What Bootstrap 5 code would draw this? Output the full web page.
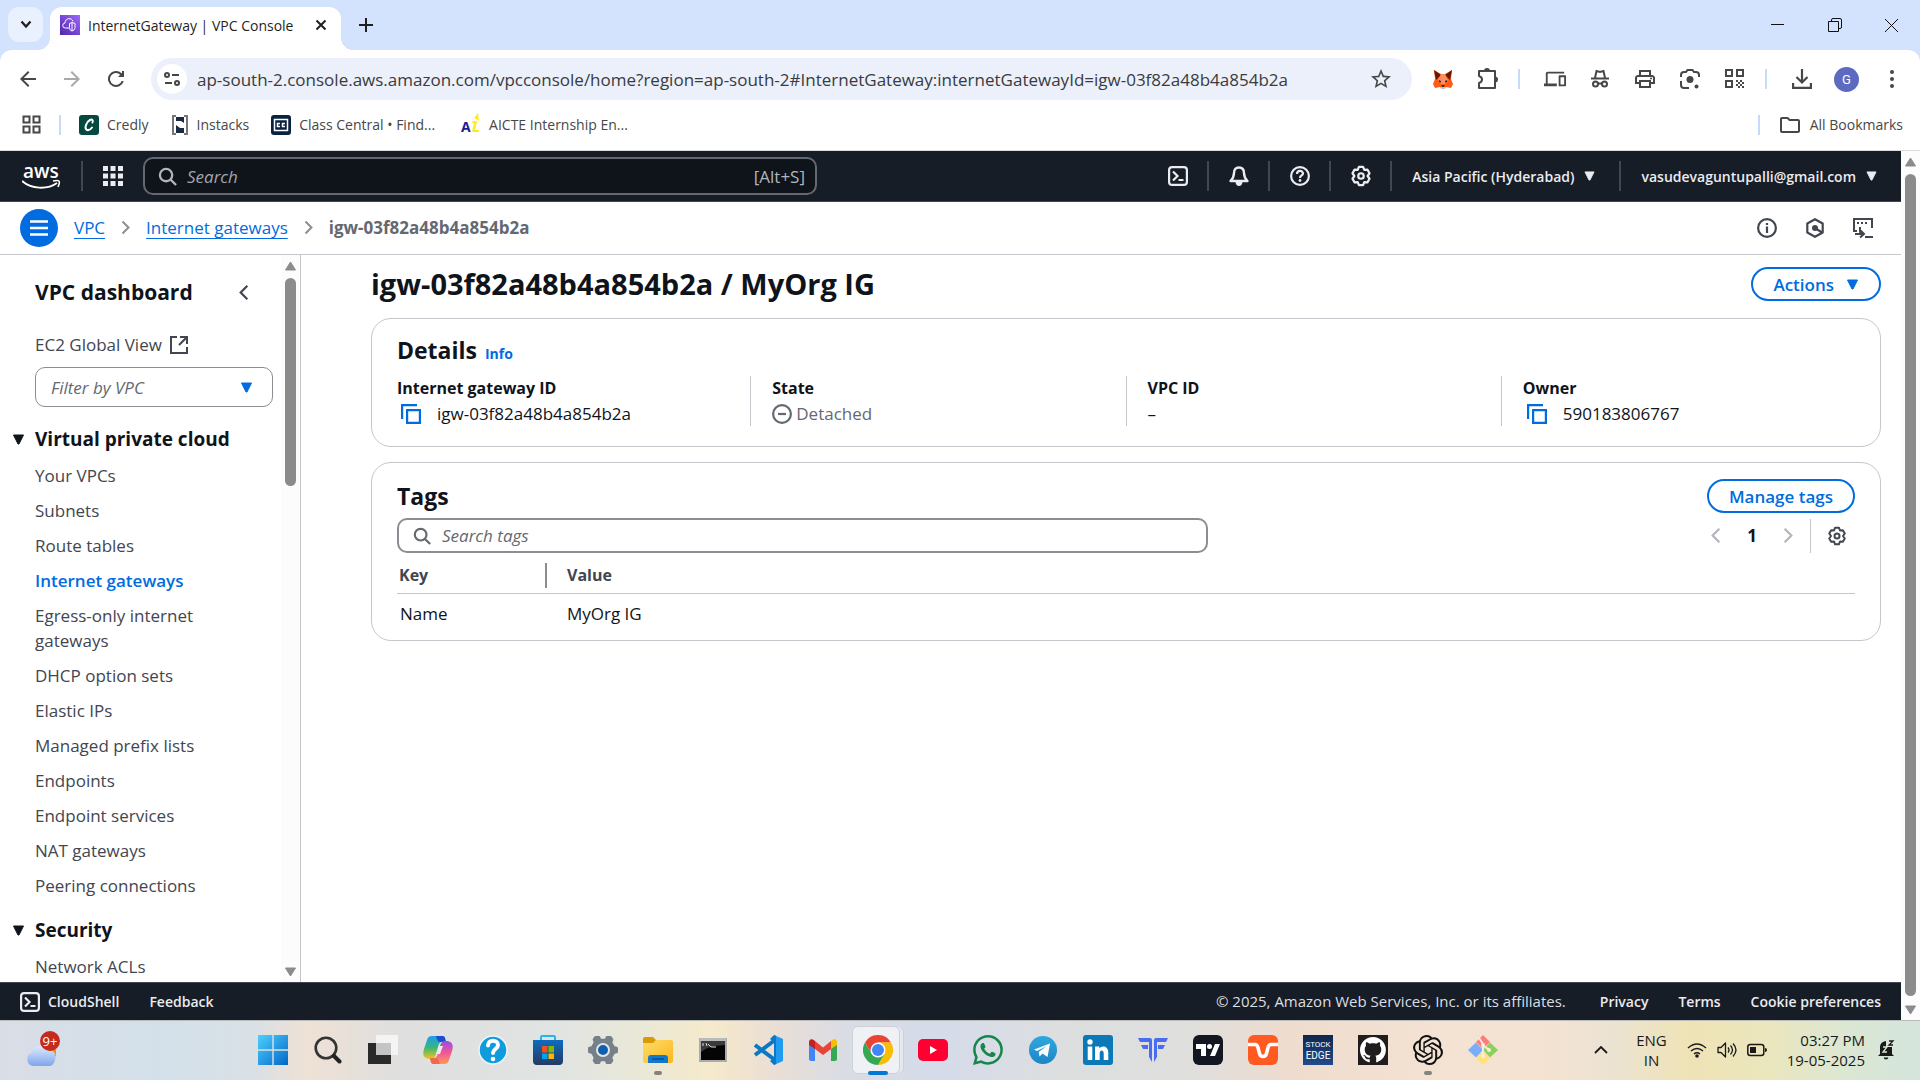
<!DOCTYPE html>
<html lang="en">
<head>
<meta charset="utf-8">
<meta name="viewport" content="width=device-width, initial-scale=1">
<title>InternetGateway | VPC Console</title>
<link href="https://cdn.jsdelivr.net/npm/bootstrap@5.3.0/dist/css/bootstrap.min.css" rel="stylesheet">
<style>
:root{--ink:#0f141a;--ink2:#424650;--muted:#656871;--blue:#006ce0;--rule:#c6c6cd;--bar:#161d26;--strip:#d3e3fd}
body{font-family:"Open Sans","Noto Sans",sans-serif;font-size:17px;line-height:25px;color:var(--ink);background:#fff}
button,input,select{font-family:inherit;line-height:inherit;color:inherit}
svg{display:block;flex:none}
a{color:inherit;text-decoration:none}
.plain{border:0;background:none;padding:0;display:flex;align-items:center;justify-content:center;flex:none}
.ln{fill:none;stroke:currentColor}
.i20{width:20px;height:20px}.i30{width:30px;height:30px}
.caret{width:11px;height:10px}
.caret-lg{width:13px;height:11px}
.c-blue{color:var(--blue)}.c-muted{color:var(--muted)}.c-ink2{color:var(--ink2)}.c-off{color:#b4b4bb}.c-sep{color:#8c8c94}
.shrinkable{min-height:0;min-width:0}
/* browser chrome */
.tabstrip{background:var(--strip);height:50px;padding:7px 0 0 8px;font-size:14px;color:#1f1f1f}
.tabsearch{width:35px;height:35px;border-radius:11px;background:#e9f0fe}
.tabcur{width:291px;height:43px;border-radius:12px 12px 0 0;background:#fff;padding:0 14px 7px 10px;margin-left:7px;position:relative}
.tabcur::before,.tabcur::after{content:"";position:absolute;bottom:0;width:12px;height:12px}
.tabcur::before{left:-12px;background:radial-gradient(circle at 0 0,transparent 12px,#fff 12px)}
.tabcur::after{right:-12px;background:radial-gradient(circle at 100% 0,transparent 12px,#fff 12px)}
.newtab{width:36px;height:36px;margin-left:7px}
.winctl button{width:57px;height:36px}
.toolwrap{background:var(--strip)}
.toolbar{background:#fff;border-radius:12px 12px 0 0;height:58px;color:#474747;padding:0 6px}
.toolbar .tb{width:44px;height:44px}
.toolbar .ext{width:45px}
.toolbar .vsep{margin:0 12px 0 8px}
.omni{height:42px;border-radius:21px;background:#ebf0fa;padding:0 20px 0 6px;margin-left:13px}
.omni input{border:0;background:none;outline:0;font-size:17px;color:#3a3b3e;padding:0 0 0 10px;min-width:0}
.siteinfo{width:30px;height:30px;border-radius:15px;background:#fff}
.vsep{width:2px;height:20px;background:#c7dafb;flex:none}
.avatar{width:25px;height:25px;border-radius:50%;background:#5c6bc0;color:#fff;font:400 13px/25px Roboto,sans-serif}
.bookmarks{height:43px;border-bottom:1px solid #dadce0;padding:0 17px 9px 22px;font-size:14px;line-height:20px;color:#474747;gap:22px}
.bookmarks a{display:flex;align-items:center;gap:8px}
.bookmarks .vsep{margin:0 -4px}
/* console header */
.awsbar{background:var(--bar);height:51px;color:#ebebf0;padding:0 24px 0 22px;font-size:15px;border-bottom:1px solid #424650}
.awsbar .div{width:2px;height:30px;background:#424650;flex:none}
.gsearch{width:674px;height:38px;border:2px solid #656871;border-radius:10px;background:#0f141a;padding:0 10px 0 13px;font-size:17px;color:#b4b4bb;margin-left:20px}
.gsearch input{background:none;border:0;outline:0;min-width:0}
.gsearch input::placeholder{color:#a4a4ad;font-style:italic;opacity:1}
.hdrbtn{width:59px}
.hdrtxt{font-size:14px;font-weight:600;gap:10px}
.crumbs{height:53px;border-bottom:1px solid var(--rule);padding:0 28px 1px 20px}
.burger{width:38px;height:38px;border-radius:50%;background:var(--blue);color:#fff}
.crumbs li a{color:var(--blue);text-decoration:underline;text-underline-offset:4px}
.crumbs li{display:flex;align-items:center}
/* side navigation */
.sidenav{width:301px;border-right:1px solid var(--rule);flex:none;min-height:0}
.navbody{overflow:hidden;padding:25px 0 0 35px;color:var(--ink2);min-height:0}
.navbody h2{font-size:21px;line-height:25px;font-weight:700;color:var(--ink);margin:0 0 27px}
.vpcsel{width:238px;height:40px;border:1px solid #8c8c94;border-radius:10px;padding:0 19px 0 15px;margin:10px 0 20px}
.vpcsel select{border:0;background:none;appearance:none;outline:0;font-style:italic;color:var(--muted);padding:0}
.navbody h3{font-size:19px;line-height:25px;font-weight:700;color:var(--ink);margin:0 0 11px -23px;gap:10px}
.navbody ul{margin:0 0 20px;width:190px}
.navbody li{margin-bottom:10px}
.navbody li .on{color:var(--blue);font-weight:600}
.vbar{background:#fcfcfc;color:#8b8b8b;flex:none;width:19px;padding:6px 0 5px}
.thumb{width:11px;border-radius:6px;background:#8b8b8b;margin:7px 0 9px}
.thumb-nav{height:29%}
/* content */
.content{padding:12px 20px 0 70px;min-width:0}
.titlebar{margin-bottom:17px}
.content h1{font-size:29px;line-height:34px;font-weight:700;margin:0}
.panel{border:1px solid var(--rule);border-radius:20px;padding:16px 25px 0}
.panel-details{padding-bottom:20px;margin-bottom:15px}
.panel h2{font-size:23px;line-height:30px;font-weight:700;margin:0}
.info{font-size:14px;font-weight:700}
.pill{border:2px solid var(--blue);border-radius:17px;height:34px;background:#fff;color:var(--blue);font-weight:600;font-size:17px;padding:0 20px;display:flex;align-items:center;gap:12px}
.facts{--bs-gutter-x:42px;margin-top:10px}
.facts .col+.col{border-left:1px solid var(--rule)}
.facts dt{font-size:16px;font-weight:700}.facts dd{margin:0}
.tagtools{margin-top:5px}
.tagsearch{width:811px;height:35px;border:2px solid #8c8c94;border-radius:10px;padding:0 14px;color:var(--muted)}
.tagsearch input{border:0;background:none;outline:0;padding:0 0 0 11px;min-width:0}
.tagsearch input::placeholder{color:var(--muted);font-style:italic;opacity:1}
.pageno{margin:0 26px}
.pagerule{width:1px;height:34px;background:var(--rule);margin:0 16px 0 17px}
.tagtable{width:100%}
.tagtable th{padding:10px 0 5px;color:var(--ink2);font-weight:700;font-size:16px;border-bottom:1px solid var(--rule)}
.tagtable th:first-child{width:150px}
.tagtable th>div{border-right:2px solid #8c8c94;padding-left:2px}
.tagtable th:last-child>div{border:0}
.tagtable td{padding:7px 0 14px 3px}
.tagtable th:last-child>div,.tagtable td:last-child{padding-left:20px}
.foot{background:var(--bar);color:#ebebf0;height:38px;padding:0 20px;font-size:14px;font-weight:600;border-top:1px solid #424650;gap:30px}
.foot .legal{font-size:15px;font-weight:400;color:#dedee3;margin-right:4px}
/* taskbar */
.taskbar{height:60px;border-top:1px solid #b9bcb9;padding-bottom:2px;color:#1a1a1a;font-size:15px;line-height:20px;background:linear-gradient(90deg,#d9dde6 0,#d3e0ea 8%,#d9e0e6 13%,#eee1d5 16%,#dfdfdf 21%,#e0e4e2 29%,#e9e8d8 33%,#f5eacb 37%,#ecdfd4 40%,#d9dce4 44%,#d5dbea 49%,#dcdedf 55%,#dfdfdd 62%,#eedccf 67%,#f4e2d3 76%,#f3e2d2 81%,#ebe3d2 84%,#efe3b6 88%,#ebe6bd 92%,#dce7d3 96%,#d4e5dc 100%)}
.tasks{width:245px;flex:none;padding-left:24px}
.app{width:55px;height:58px;position:relative}
.app.run::after{content:"";position:absolute;bottom:4px;width:8px;height:4px;border-radius:2px;background:#85837c}
.app.active::before{content:"";position:absolute;inset:5px 5px 5px 2px;border-radius:6px;background:#f0f1f5;border:1px solid #cfd1d8;box-shadow:4px 0 0 -1px #e6e8ef,5px 0 0 -1px #cfd1d8}
.app.active::after{width:20px;height:4px;background:#0078d4}
.app svg{position:relative}
.tray{padding-right:25px}
.traybtns{gap:10px}
.clock{margin:0 12px 0 20px}
</style>
</head>
<body class="vh-100 d-flex flex-column overflow-hidden">
<svg width="0" height="0" class="position-absolute" aria-hidden="true">
<defs>
<linearGradient id="gWin" x1="0" y1="0" x2="1" y2="1"><stop offset="0" stop-color="#4fd0ff"/><stop offset="1" stop-color="#0067c8"/></linearGradient>
<linearGradient id="gCopA" x1="0" y1="0" x2="0" y2="1"><stop offset="0" stop-color="#1e9bf0"/><stop offset=".5" stop-color="#37b779"/><stop offset="1" stop-color="#f5c518"/></linearGradient>
<linearGradient id="gCopB" x1="0" y1="0" x2="0" y2="1"><stop offset="0" stop-color="#9a4be0"/><stop offset=".5" stop-color="#f0569a"/><stop offset="1" stop-color="#ff9a55"/></linearGradient>
<linearGradient id="gStore" x1="0" y1="0" x2="0" y2="1"><stop offset="0" stop-color="#0f6cbd"/><stop offset="1" stop-color="#253a63"/></linearGradient>
<linearGradient id="gFold" x1="0" y1="0" x2="1" y2="1"><stop offset="0" stop-color="#ffdc6b"/><stop offset="1" stop-color="#fbb71a"/></linearGradient>
<linearGradient id="gCloud" x1="0" y1="0" x2="0" y2="1"><stop offset="0" stop-color="#dbe8ff"/><stop offset="1" stop-color="#7ea6ea"/></linearGradient>
<linearGradient id="gVpc" x1="0" y1="1" x2="1" y2="0"><stop offset="0" stop-color="#4d27aa"/><stop offset="1" stop-color="#a166ff"/></linearGradient>
<linearGradient id="gTg" x1="0" y1="0" x2="0" y2="1"><stop offset="0" stop-color="#2fa8e0"/><stop offset="1" stop-color="#1c86c4"/></linearGradient>
<linearGradient id="gStk" x1="0" y1="0" x2="0" y2="1"><stop offset="0" stop-color="#10254a"/><stop offset="1" stop-color="#234a8c"/></linearGradient>
</defs>
<symbol id="caret" viewBox="0 0 12 11"><path d="M1 1h10L6.500 10h-1z" fill="currentColor" stroke="currentColor" stroke-linejoin="round"/></symbol>
<symbol id="gear" viewBox="0 0 24 24"><path class="ln" stroke-width="2.400" stroke-linejoin="round" d="M9.700 2h4.600l1.300 3.400 3.400-.4 2.300 4-2.100 3 2.100 3-2.300 4-3.400-.4-1.300 3.400H9.700l-1.300-3.400-3.400.4-2.300-4 2.100-3-2.100-3 2.300-4 3.400.4z"/><circle class="ln" stroke-width="2.400" cx="12" cy="12" r="3"/></symbol>
<symbol id="mag" viewBox="0 0 20 20"><circle class="ln" stroke-width="2.400" cx="8.500" cy="8.500" r="6.500"/><path class="ln" stroke-width="2.400" d="M13 13l6 6"/></symbol>
<symbol id="shell" viewBox="0 0 20 20"><rect class="ln" stroke-width="2.200" x="1.100" y="1.100" width="17.800" height="17.800" rx="3"/><path class="ln" stroke-width="2.200" d="M5 5.500L9.500 10 5 14.500M10.500 14h5"/></symbol>
<symbol id="copy" viewBox="0 0 20 20"><path class="ln" stroke-width="2.200" d="M1.100 15V1.100H16M6.100 6.100h12.800v12.800H6.100z"/></symbol>
<symbol id="chevR" viewBox="0 0 12 20"><path class="ln" stroke-width="2.600" d="M2 2l8 8-8 8"/></symbol>
<symbol id="chevL" viewBox="0 0 12 20"><path class="ln" stroke-width="2.600" d="M10 2l-8 8 8 8"/></symbol>
<symbol id="sarrow" viewBox="0 0 12 10"><path d="M6 1l5 8H1z" fill="currentColor" stroke="currentColor" stroke-linejoin="round"/></symbol>
<symbol id="sarrowD" viewBox="0 0 12 10"><path d="M6 9l5-8H1z" fill="currentColor" stroke="currentColor" stroke-linejoin="round"/></symbol>
</svg>

<header class="flex-shrink-0">
  <div class="tabstrip d-flex">
    <button class="plain tabsearch" aria-label="Search tabs"><svg width="12" height="9" viewBox="0 0 12 9"><path class="ln" stroke-width="2.200" d="M1.500 1.500L6 6.500l4.500-5"/></svg></button>
    <div class="tabcur d-flex align-items-center">
      <svg width="20" height="20" viewBox="0 0 20 20"><path fill="url(#gVpc)" d="M0 0h20v20H0z"/><path fill="none" stroke="#fff" d="M9 13H5.500a2.500 2.500 0 0 1-.5-5c0-5 7-6 8-1.500M9.500 8.500l2.500-1 3 1v4c0 2-1.500 3-3 3.500-1.500-.5-2.500-1.500-2.500-3.500zM12 8v7.500"/></svg>
      <span class="ms-2 flex-grow-1 text-nowrap">InternetGateway | VPC Console</span>
      <button class="plain" aria-label="Close tab"><svg width="12" height="12" viewBox="0 0 12 12"><path class="ln" stroke-width="2" d="M1.500 1.500l9 9m0-9l-9 9"/></svg></button>
    </div>
    <button class="plain newtab" aria-label="New tab"><svg width="14" height="14" viewBox="0 0 14 14"><path class="ln" stroke-width="2" d="M7 0v14M0 7h14"/></svg></button>
    <div class="winctl d-flex ms-auto">
      <button class="plain" aria-label="Minimise"><svg width="13" height="13" viewBox="0 0 13 13"><path stroke="#111" d="M0 5.500h13"/></svg></button>
      <button class="plain" aria-label="Restore"><svg width="14" height="14" viewBox="0 0 14 14"><path fill="none" stroke="#111" d="M.5 3.500h10v10H.5zM3.500 3V2q0-1.500 1.500-1.500h7q1.500 0 1.500 1.500v7q0 1.500-1.500 1.500h-1"/></svg></button>
      <button class="plain" aria-label="Close"><svg width="13" height="13" viewBox="0 0 13 13"><path stroke="#111" d="M0 0l13 13M13 0L0 13"/></svg></button>
    </div>
  </div>
  <div class="toolwrap">
    <div class="toolbar d-flex align-items-center">
      <button class="plain tb" aria-label="Back"><svg class="i20" viewBox="2 2 20 20"><path fill="currentColor" d="M20 11H7.830l5.590-5.590L12 4l-8 8 8 8 1.410-1.410L7.830 13H20z"/></svg></button>
      <button class="plain tb" aria-label="Forward"><svg class="i20" viewBox="2 2 20 20"><path fill="#aaa" d="M4 11h12.170l-5.590-5.590L12 4l8 8-8 8-1.410-1.410L16.170 13H4z"/></svg></button>
      <button class="plain tb" aria-label="Reload"><svg class="i20" viewBox="2 2 20 20"><path fill="currentColor" d="M17.650 6.350A8 8 0 1 0 19.730 14h-2.080A6 6 0 1 1 16.220 7.780L14 10h6V4h-2v2z"/></svg></button>
      <div class="omni d-flex align-items-center flex-grow-1">
        <button class="plain siteinfo" aria-label="View site information"><svg width="16" height="14" viewBox="0 0 16 14"><g class="ln" stroke-width="2"><circle cx="3" cy="3" r="2"/><path d="M8 3h7M1 11h7"/><circle cx="13" cy="11" r="2"/></g></svg></button>
        <input class="flex-grow-1" aria-label="Address" value="ap-south-2.console.aws.amazon.com/vpcconsole/home?region=ap-south-2#InternetGateway:internetGatewayId=igw-03f82a48b4a854b2a">
        <button class="plain" aria-label="Bookmark this tab"><svg width="22" height="22" viewBox="1 1 22 22"><path fill="currentColor" d="M22 9.240l-7.190-.62L12 2 9.190 8.630 2 9.240l5.460 4.730L5.820 21 12 17.270 18.180 21l-1.630-7.030zM12 15.400l-3.760 2.270 1-4.280-3.320-2.880 4.380-.38L12 6.100l1.710 4.040 4.380.38-3.320 2.880 1 4.280z"/></svg></button>
      </div>
      <button class="plain ext ms-2" aria-label="MetaMask"><svg class="i20" viewBox="0 0 20 20"><path fill="#ff5c16" d="M1 1l7 4h4l7-4-1 9 2 5-2 4-5-1-2 2H9l-2-2-5 1-2-4 2-5z"/><path fill="#661800" d="M1 1l7 5-5 5zM19 1l-7 5 5 5z"/><path fill="#ff8d5d" d="M8 5h4l3 6-3 4H8l-3-4z"/><path fill="#233447" d="M6 11l2 1v1.500L6 13zM14 11l-2 1v1.500l2-.5zM8.500 16h3l-.5 2H9z"/><path fill="#c0c4cd" d="M8 18h4l-.5 2h-3z"/></svg></button>
      <button class="plain ext" aria-label="Extensions"><svg width="22" height="24" viewBox="0 0 22 24"><path class="ln" stroke-width="2" stroke-linejoin="round" d="M2 4h16v17H2v-5q3-1 3-3.500T2 9z"/><path fill="currentColor" d="M7 4a3 3 0 0 1 6 0zM18 9.500a3 3 0 0 1 0 6z"/></svg></button>
      <span class="vsep"></span>
      <button class="plain ext" aria-label="Send to your devices"><svg width="22" height="22" viewBox="0 0 24 24"><path fill="currentColor" d="M4 6h18V4H4c-1.100 0-2 .9-2 2v11H0v3h14v-3H4V6zm19 2h-6c-.55 0-1 .45-1 1v10c0 .55.45 1 1 1h6c.55 0 1-.45 1-1V9c0-.55-.45-1-1-1zm-1 10h-4v-8h4v8z"/></svg></button>
      <button class="plain ext" aria-label="New Incognito window"><svg width="18" height="20" viewBox="0 0 18 20"><g class="ln" stroke-width="2"><path d="M0 9.500h18M4 9l1.500-7 3.500 1 3.500-1L14 9"/><circle cx="4.500" cy="15" r="2.500"/><circle cx="13.500" cy="15" r="2.500"/><path d="M7 14.500h4"/></g></svg></button>
      <button class="plain ext" aria-label="Print"><svg width="24" height="24" viewBox="0 0 24 24"><path fill="currentColor" d="M19 8h-1V3H6v5H5c-1.660 0-3 1.340-3 3v6h4v4h12v-4h4v-6c0-1.660-1.340-3-3-3zM8 5h8v3H8V5zm8 14H8v-4h8v4zm2-4v-2H6v2H4v-4c0-.55.45-1 1-1h14c.55 0 1 .45 1 1v4h-2z"/><circle cx="18" cy="11.500" r="1" fill="currentColor"/></svg></button>
      <button class="plain ext" aria-label="Search with Google Lens"><svg width="20" height="22" viewBox="0 0 20 22"><g class="ln" stroke-width="2"><path d="M1 9V7q0-3 3-3h2l1.500-2h5L14 4h2q3 0 3 3v2M1 13v4q0 3 3 3h5"/></g><circle cx="10" cy="11.500" r="3.500" fill="currentColor"/><circle cx="16.500" cy="18.500" r="2" fill="currentColor"/></svg></button>
      <button class="plain ext" aria-label="Create QR code"><svg class="i20" viewBox="0 0 20 20"><path class="ln" stroke-width="2" d="M1 1h6v6H1zM12 1h6v6h-6zM1 12h6v6H1z"/><path fill="currentColor" d="M11 11h2v2h-2zM15 11h2v2h-2zM13 13h2v2h-2zM17 13h2v2h-2zM11 15h2v2h-2zM15 15h2v2h-2zM13 17h2v2h-2zM17 17h2v2h-2z"/></svg></button>
      <span class="vsep"></span>
      <button class="plain ext" aria-label="Downloads"><svg width="20" height="20" viewBox="0 0 20 20"><path class="ln" stroke-width="2.200" d="M10 0v13M4.500 8l5.500 5.500L15.500 8M1.100 14v4.900h17.800V14"/></svg></button>
      <button class="plain ext" aria-label="Profile"><span class="avatar">G</span></button>
      <button class="plain ext" aria-label="Menu"><svg width="4" height="20" viewBox="0 0 4 20"><g fill="currentColor"><circle cx="2" cy="3" r="2"/><circle cx="2" cy="10" r="2"/><circle cx="2" cy="17" r="2"/></g></svg></button>
    </div>
  </div>
  <nav class="bookmarks d-flex align-items-center bg-white" aria-label="Bookmarks">
    <button class="plain" aria-label="Tab groups"><svg width="19" height="19" viewBox="0 0 19 19"><path class="ln" stroke-width="2" d="M1.500 1.500h6v6h-6zM11.500 1.500h6v6h-6zM1.500 11.500h6v6h-6zM11.500 11.500h6v6h-6z"/></svg></button>
    <span class="vsep"></span>
    <a href="#"><svg class="i20" viewBox="0 0 20 20"><rect width="20" height="20" rx="3" fill="#05483f"/><path fill="none" stroke="#fff" stroke-width="2" stroke-linecap="round" d="M13.500 7.500c1-2.500-.5-3.500-2.500-2.500-4 2-6 9-3 10 2 .5 4-1 5-2.500"/></svg>Credly</a>
    <a href="#"><svg width="18" height="20" viewBox="-1 0 18 20"><path fill="none" stroke="#777" stroke-width="2" d="M4 1H1v18h3M12 1h3v18h-3"/><path fill="#1b2a44" d="M4 2h8v6l-3-2H4zM4 10l4 3h4v5H4z"/></svg>Instacks</a>
    <a href="#"><svg class="i20" viewBox="0 0 20 20"><rect width="20" height="20" rx="3" fill="#08223f"/><path fill="none" stroke="#fff" stroke-width="1.500" d="M3.500 4.500h13v11h-13zM9 8.500H6.500v3H9M14 8.500h-2.500v3H14"/></svg>Class Central • Find...</a>
    <a href="#" class="ms-1"><svg width="20" height="26" viewBox="0 -1 20 26"><text x="0" y="19" font-size="14" font-weight="700" fill="#1c1c8c">A</text><path fill="#ffec1a" d="M12 8h4l-2 9h4v2h-7l2-9h-2zM13 5l4-5 1 8-3-2z"/></svg>AICTE Internship En...</a>
    <span class="vsep ms-auto"></span>
    <a href="#"><svg width="24" height="24" viewBox="0 0 24 24"><path fill="currentColor" d="M9.170 6l2 2H20v10H4V6h5.170M10 4H4c-1.100 0-1.990.9-1.990 2L2 18c0 1.100.9 2 2 2h16c1.100 0 2-.9 2-2V8c0-1.100-.9-2-2-2h-8l-2-2z"/></svg>All Bookmarks</a>
  </nav>
</header>

<div class="d-flex flex-grow-1 shrinkable">
<div class="d-flex flex-column flex-grow-1 shrinkable">
  <header class="awsbar d-flex align-items-center flex-shrink-0">
    <a href="#" aria-label="AWS console home"><svg width="43" height="40" viewBox="0 -8 43 40"><text x="1" y="14" font-size="19" font-weight="600" fill="#fff">aws</text><path fill="none" stroke="#fff" stroke-width="2" d="M0 17c9 8 25 9 35 2"/><path fill="none" stroke="#fff" stroke-width="1.600" d="M31 17c6-1.500 8-.5 5 6"/></svg></a>
    <span class="div ms-3 me-3"></span>
    <button class="plain ms-1" aria-label="Services"><svg class="i20" viewBox="0 0 20 20"><path fill="currentColor" d="M0 0h5v5H0zM7.500 0h5v5h-5zM15 0h5v5h-5zM0 7.500h5v5H0zM7.500 7.500h5v5h-5zM15 7.500h5v5h-5zM0 15h5v5H0zM7.500 15h5v5h-5zM15 15h5v5h-5z"/></svg></button>
    <div class="gsearch d-flex align-items-center"><svg width="19" height="19"><use href="#mag"/></svg><input class="flex-grow-1 ms-2" placeholder="Search" aria-label="Search"><span>[Alt+S]</span></div>
    <div class="d-flex align-items-center ms-auto">
      <button class="plain hdrbtn" aria-label="CloudShell"><svg class="i20"><use href="#shell"/></svg></button><span class="div"></span>
      <button class="plain hdrbtn" aria-label="Notifications"><svg class="i20" viewBox="0 0 20 20"><path class="ln" stroke-width="2.400" stroke-linejoin="round" d="M10 1.500c-3.500 0-5 2.500-5 5.500 0 4-1 5.500-3.500 8h17C16 12.500 15 11 15 7c0-3-1.500-5.500-5-5.500z"/><path fill="currentColor" d="M6.500 16h7q-.5 4-3.500 4t-3.500-4z"/></svg></button><span class="div"></span>
      <button class="plain hdrbtn" aria-label="Help"><svg class="i20" viewBox="0 0 20 20"><circle class="ln" stroke-width="2.200" cx="10" cy="10" r="8.900"/><path class="ln" stroke-width="2.200" d="M7 8c0-4 6-4 6-.5 0 2-3 2-3 4.500"/><circle cx="10" cy="14.500" r="1.400" fill="currentColor"/></svg></button><span class="div"></span>
      <button class="plain hdrbtn" aria-label="Settings"><svg width="22" height="22"><use href="#gear"/></svg></button><span class="div me-1"></span>
      <button class="plain hdrtxt ms-3">Asia Pacific (Hyderabad)<svg class="caret"><use href="#caret"/></svg></button><span class="div ms-4 me-1"></span>
      <button class="plain hdrtxt ms-3">vasudevaguntupalli@gmail.com<svg class="caret"><use href="#caret"/></svg></button>
    </div>
  </header>

  <div class="crumbs d-flex align-items-center flex-shrink-0">
    <button class="plain burger" aria-label="Toggle navigation"><svg width="18" height="16" viewBox="0 0 18 16"><path class="ln" stroke-width="2.400" d="M0 1.500h18M0 8h18M0 14.500h18"/></svg></button>
    <ol class="list-unstyled d-flex m-0 ms-3">
      <li><a href="#">VPC</a><svg class="mx-3 c-sep" width="9" height="17"><use href="#chevR"/></svg></li>
      <li><a href="#">Internet gateways</a><svg class="mx-3 c-sep" width="9" height="17"><use href="#chevR"/></svg></li>
      <li class="fw-bold c-muted">igw-03f82a48b4a854b2a</li>
    </ol>
    <div class="d-flex ms-auto gap-4 c-ink2">
      <button class="plain" aria-label="Info"><svg class="i20" viewBox="0 0 20 20"><circle class="ln" stroke-width="2.200" cx="10" cy="10" r="8.900"/><path class="ln" stroke-width="2.200" d="M10 8.500V15M10 5v2"/></svg></button>
      <button class="plain mx-1" aria-label="Diagnose"><svg class="i20" viewBox="0 0 20 20"><path class="ln" stroke-width="2.200" stroke-linejoin="round" d="M10 1.200l7.700 4.300v9L10 18.800l-7.700-4.300v-9z"/><circle cx="10" cy="10" r="3" fill="currentColor"/><path class="ln" stroke-width="2.200" d="M10 10l7 4.500"/></svg></button>
      <button class="plain" aria-label="Record actions"><svg width="20" height="20" viewBox="0 0 20 20"><path class="ln" stroke-width="2" d="M4 13H1V1h18v9M12 19h8M7 9v4q0 3 3 3M7 12l4 4-4 3.500M2 16h8"/><path fill="currentColor" d="M4 4h2v2H4zM8 4h2v2H8zM12 4h2v2h-2z"/></svg></button>
    </div>
  </div>

  <div class="d-flex flex-grow-1 shrinkable">
    <aside class="sidenav d-flex">
      <div class="navbody flex-grow-1">
        <div class="d-flex align-items-start"><h2>VPC dashboard</h2><button class="plain ms-auto me-4 pe-2 pt-1" aria-label="Collapse navigation"><svg width="10" height="17"><use href="#chevL"/></svg></button></div>
        <a href="#" class="d-flex align-items-center gap-2">EC2 Global View <svg width="18" height="18" viewBox="0 0 18 18"><path class="ln" stroke-width="2" d="M7 1H1v16h16v-6M10 1h7v7M16.500 1.500L9 9"/></svg></a>
        <div class="vpcsel d-flex align-items-center"><select class="flex-grow-1" aria-label="Filter by VPC"><option>Filter by VPC</option></select><svg class="caret-lg c-blue"><use href="#caret"/></svg></div>
        <h3 class="d-flex align-items-center"><svg class="caret-lg"><use href="#caret"/></svg>Virtual private cloud</h3>
        <ul class="list-unstyled">
          <li><a href="#">Your VPCs</a></li><li><a href="#">Subnets</a></li><li><a href="#">Route tables</a></li><li><a href="#" class="on">Internet gateways</a></li><li><a href="#">Egress-only internet gateways</a></li><li><a href="#">DHCP option sets</a></li><li><a href="#">Elastic IPs</a></li><li><a href="#">Managed prefix lists</a></li><li><a href="#">Endpoints</a></li><li><a href="#">Endpoint services</a></li><li><a href="#">NAT gateways</a></li><li><a href="#">Peering connections</a></li>
        </ul>
        <h3 class="d-flex align-items-center"><svg class="caret-lg"><use href="#caret"/></svg>Security</h3>
        <ul class="list-unstyled"><li><a href="#">Network ACLs</a></li></ul>
      </div>
      <div class="vbar d-flex flex-column align-items-center">
        <svg width="13" height="10"><use href="#sarrow"/></svg>
        <div class="thumb thumb-nav"></div>
        <svg class="mt-auto" width="13" height="10"><use href="#sarrowD"/></svg>
      </div>
    </aside>

    <main class="content flex-grow-1">
      <div class="titlebar d-flex align-items-center justify-content-between"><h1>igw-03f82a48b4a854b2a / MyOrg IG</h1><button class="pill">Actions<svg class="caret-lg"><use href="#caret"/></svg></button></div>
      <section class="panel panel-details">
        <div class="d-flex align-items-baseline gap-2"><h2>Details</h2><a href="#" class="info c-blue">Info</a></div>
        <dl class="row facts mb-0">
          <div class="col"><dt>Internet gateway ID</dt><dd class="d-flex align-items-center"><button class="plain ms-1 me-3" aria-label="Copy ID"><svg class="i20 c-blue"><use href="#copy"/></svg></button>igw-03f82a48b4a854b2a</dd></div>
          <div class="col"><dt>State</dt><dd class="d-flex align-items-center gap-1 c-muted"><svg class="i20" viewBox="0 0 20 20"><circle class="ln" stroke-width="2.200" cx="10" cy="10" r="8.900"/><path class="ln" stroke-width="2.200" d="M6 10h8"/></svg>Detached</dd></div>
          <div class="col"><dt>VPC ID</dt><dd>–</dd></div>
          <div class="col"><dt>Owner</dt><dd class="d-flex align-items-center"><button class="plain ms-1 me-3" aria-label="Copy owner"><svg class="i20 c-blue"><use href="#copy"/></svg></button>590183806767</dd></div>
        </dl>
      </section>
      <section class="panel">
        <div class="d-flex align-items-center justify-content-between"><h2>Tags</h2><button class="pill">Manage tags</button></div>
        <div class="tagtools d-flex align-items-center">
          <div class="tagsearch d-flex align-items-center"><svg width="18" height="18"><use href="#mag"/></svg><input class="flex-grow-1" placeholder="Search tags" aria-label="Search tags"></div>
          <div class="d-flex align-items-center ms-auto">
            <button class="plain c-off" aria-label="Previous page"><svg width="10" height="17"><use href="#chevL"/></svg></button>
            <span class="fw-bold pageno">1</span>
            <button class="plain c-off" aria-label="Next page"><svg width="10" height="17"><use href="#chevR"/></svg></button>
            <span class="pagerule"></span>
            <button class="plain me-2 c-ink2" aria-label="Preferences"><svg width="20" height="20"><use href="#gear"/></svg></button>
          </div>
        </div>
        <table class="tagtable">
          <thead><tr><th><div>Key</div></th><th><div>Value</div></th></tr></thead>
          <tbody><tr><td>Name</td><td>MyOrg IG</td></tr></tbody>
        </table>
      </section>
    </main>
  </div>

  <footer class="foot d-flex align-items-center flex-shrink-0">
    <a href="#" class="d-flex align-items-center gap-2"><svg class="i20"><use href="#shell"/></svg>CloudShell</a>
    <a href="#">Feedback</a>
    <span class="ms-auto legal">© 2025, Amazon Web Services, Inc. or its affiliates.</span>
    <a href="#">Privacy</a><a href="#">Terms</a><a href="#">Cookie preferences</a>
  </footer>
</div>
<div class="vbar d-flex flex-column align-items-center">
  <svg width="13" height="10"><use href="#sarrow"/></svg>
  <div class="thumb flex-grow-1"></div>
  <svg width="13" height="10"><use href="#sarrowD"/></svg>
</div>
</div>

<footer class="taskbar d-flex align-items-center flex-shrink-0">
  <div class="tasks"><button class="plain" aria-label="Weather"><svg width="38" height="42" viewBox="0 0 38 42"><path fill="#f28a1c" d="M24 20h8v7h-8z"/><path fill="url(#gCloud)" d="M9 37a7 7 0 0 1-1-13.500C10 16 20 15 23 22c7-2 10 4 8 9-1 4-3 6-6 6z"/><circle cx="26" cy="12" r="10" fill="#c42b1c"/><text x="26" y="17" font-size="13" text-anchor="middle" fill="#fff">9+</text></svg></button></div>
  <button class="plain app" aria-label="Start"><svg class="i30" viewBox="0 0 30 30"><path fill="url(#gWin)" d="M0 0h14.300v14.300H0zM15.700 0H30v14.300H15.700zM0 15.700h14.300V30H0zM15.700 15.700H30V30H15.700z"/></svg></button>
  <button class="plain app" aria-label="Search"><svg width="28" height="28" viewBox="0 0 28 28"><circle cx="12" cy="12" r="10.300" fill="none" stroke="#333" stroke-width="2.600"/><path stroke="#222" stroke-width="4" stroke-linecap="round" d="M20 20l5.500 5.500"/></svg></button>
  <button class="plain app" aria-label="Task view"><svg class="i30" viewBox="0 0 30 30"><path fill="#2a2a2a" d="M0 8h23v21H0z"/><path fill="#f4f4f4" d="M8 0h22v20H8z"/><path fill="#c4c4c4" d="M8 8h15v12H8z"/></svg></button>
  <button class="plain app" aria-label="Copilot"><svg class="i30" viewBox="0 0 30 30"><path fill="url(#gCopA)" d="M9 1h10c3 0 3 2 4 6-6-1-7 1-8 5l-2 7c-1 3-2 5-6 5C1 24-1 20 1 14L4 5c1-3 2-4 5-4z"/><path fill="#1b4fd0" d="M13 1h6c3 0 3 2 4 6h-6c-3 0-3-4-4-6z"/><path fill="url(#gCopB)" d="M21 29H11c-3 0-3-2-4-6 6 1 7-1 8-5l2-7c1-3 2-5 6-5 6 0 8 4 6 10l-3 9c-1 3-2 4-5 4z"/><path fill="#ef6a4a" d="M17 29h-6c-3 0-3-2-4-6h6c3 0 3 4 4 6z"/><path fill="#e9ebee" d="M16 11h4l-3 8h-4z"/></svg></button>
  <button class="plain app" aria-label="Get help"><svg class="i30" viewBox="0 0 30 30"><circle cx="15" cy="15" r="14" fill="#0f9bdc" stroke="#eef4f8" stroke-width="1.500"/><path fill="none" stroke="#fff" stroke-width="4" stroke-linecap="round" d="M10 10.500c0-6.500 10-6 10-.5 0 4-5 4-5 8"/><circle cx="15" cy="24" r="2.300" fill="#fff"/></svg></button>
  <button class="plain app" aria-label="Microsoft Store"><svg class="i30" viewBox="0 0 30 30"><path fill="none" stroke="#27b4f0" stroke-width="2" d="M8 6V2q0-1 1-1h12q1 0 1 1v4"/><path fill="url(#gStore)" d="M0 5h30v21q0 4-4 4H4q-4 0-4-4z"/><path fill="#f25022" d="M9 11h5.500v6.500H9z"/><path fill="#7fba00" d="M15.500 11H21v6.500h-5.500z"/><path fill="#00a4ef" d="M9 18.500h5.500V24H9z"/><path fill="#ffb900" d="M15.500 18.500H21V24h-5.500z"/></svg></button>
  <button class="plain app" aria-label="Settings"><svg class="i30" viewBox="0 0 24 24"><path fill="#76808a" stroke="#76808a" stroke-width="1.500" stroke-linejoin="round" d="M6 1.500h3l.8 2.200h4.400L15 1.500h3l1.500 2-.8 2.500 2 3.500 2.500.8v3.400l-2.500.8-2 3.500.8 2.500-1.500 2h-3l-.8-2.200H9.800L9 22.500H6l-1.500-2 .8-2.500-2-3.500-2.500-.8v-3.400l2.500-.8 2-3.500-.8-2.500z"/><circle cx="12" cy="12" r="4.800" fill="#0f5fae" stroke="#e3e6e8" stroke-width="1.600"/></svg></button>
  <button class="plain app run" aria-label="File Explorer"><svg class="i30" viewBox="0 0 30 30"><path fill="#d99a06" d="M0 4q0-2 2-2h8l3 3h15v6H0z"/><path fill="url(#gFold)" d="M0 8h10l3-3h15q2 0 2 2v19q0 2-2 2H2q-2 0-2-2z"/><path fill="#1279cf" d="M5 28v-5q0-3 3-3h14q3 0 3 3v5z"/><path stroke="#0a4f91" stroke-width="1.500" d="M9 24h12"/></svg></button>
  <button class="plain app" aria-label="Command Prompt"><svg width="28" height="24" viewBox="0 0 28 24"><path fill="#050505" stroke="#a9abae" stroke-width="2" d="M1 1h26v22H1z"/><path fill="#3a3a3a" d="M2 3h24v4Q8 8 2 14z"/><path stroke="#b9bcbf" stroke-width="3" d="M1 1.500h26"/><path fill="none" stroke="#ddd" d="M4 5v3M7 5l1 3M9 6l3 3h5"/></svg></button>
  <button class="plain app" aria-label="Visual Studio Code"><svg class="i30" viewBox="0 0 30 30"><path fill="none" stroke="#0a78c2" stroke-width="4" stroke-linejoin="round" d="M22 5L2 20M22 25L2 10"/><path fill="#1f9cf0" d="M21 0l9 4v22l-9 4z"/><path fill="#0a78c2" d="M21 0l2 1v28l-2 1-4-4 4-3V7l-4-3z"/></svg></button>
  <button class="plain app" aria-label="Gmail"><svg width="28" height="22" viewBox="0 0 28 22"><path fill="#4285f4" d="M0 4l6 4v14H2q-2 0-2-2z"/><path fill="#34a853" d="M28 4l-6 4v14h4q2 0 2-2z"/><path fill="#ea4335" d="M6 2l8 6.500L22 2v8l-8 6-8-6z"/><path fill="#c5221f" d="M0 3c0-3 3-4 6-1v8L0 6z"/><path fill="#fbbc04" d="M28 3c0-3-3-4-6-1v8l6-4z"/></svg></button>
  <button class="plain app run active" aria-label="Google Chrome"><svg class="i30" viewBox="0 0 30 30"><path fill="#ea4335" d="M2 7.500A15 15 0 0 1 28 7.500H15L8.500 18.700z"/><path fill="#fbbc04" d="M28 7.500A15 15 0 0 1 15 30l6.500-11.200L15 7.500z"/><path fill="#34a853" d="M15 30A15 15 0 0 1 2 7.500l6.500 11.200h13z"/><circle cx="15" cy="15" r="7.500" fill="#fff"/><circle cx="15" cy="15" r="6" fill="#4285f4"/></svg></button>
  <button class="plain app" aria-label="YouTube"><svg width="30" height="22" viewBox="0 0 30 22"><rect width="30" height="22" rx="5" fill="#ff0033"/><path fill="#fff" d="M12 7l7 4-7 4z"/></svg></button>
  <button class="plain app" aria-label="WhatsApp"><svg class="i30" viewBox="0 0 16 16"><path fill="#17864a" d="M13.601 2.326A7.850 7.850 0 0 0 7.994 0C3.627 0 .068 3.558.064 7.926c0 1.399.366 2.760 1.057 3.965L0 16l4.204-1.102a7.900 7.900 0 0 0 3.790.965h.004c4.368 0 7.926-3.558 7.930-7.930A7.900 7.900 0 0 0 13.600 2.326zM7.994 14.521a6.600 6.600 0 0 1-3.356-.92l-.24-.144-2.494.654.666-2.433-.156-.251a6.560 6.560 0 0 1-1.007-3.505c0-3.626 2.957-6.584 6.591-6.584a6.560 6.560 0 0 1 4.660 1.931 6.560 6.560 0 0 1 1.928 4.660c-.004 3.639-2.961 6.592-6.592 6.592m3.615-4.934c-.197-.099-1.170-.578-1.353-.646-.182-.065-.315-.099-.445.099-.133.197-.513.646-.627.775-.114.133-.232.148-.43.050-.197-.1-.836-.308-1.592-.985-.59-.525-.985-1.175-1.103-1.372-.114-.198-.011-.304.088-.403.087-.088.197-.232.296-.346.1-.114.133-.198.198-.33.065-.134.034-.248-.015-.347-.05-.099-.445-1.076-.612-1.470-.16-.389-.323-.335-.445-.34-.114-.007-.247-.007-.38-.007a.73.73 0 0 0-.529.247c-.182.198-.691.677-.691 1.654s.71 1.916.81 2.049c.098.133 1.394 2.132 3.383 2.992.47.205.84.326 1.129.418.475.152.904.129 1.246.080.38-.058 1.171-.48 1.338-.943.164-.464.164-.86.114-.943-.049-.084-.182-.133-.38-.232"/></svg></button>
  <button class="plain app" aria-label="Telegram"><svg width="28" height="28" viewBox="0 0 28 28"><circle cx="14" cy="14" r="14" fill="url(#gTg)"/><path fill="#fff" d="M5 13.500L21 7.500l-2.500 13.500-5-3.500-3 3-.8-4.500 8-6-9.700 5z"/></svg></button>
  <button class="plain app" aria-label="LinkedIn"><svg class="i30" viewBox="0 0 30 30"><rect width="30" height="30" rx="3" fill="#0b78b7"/><circle cx="7" cy="7" r="2.700" fill="#fff"/><path fill="#fff" d="M4.700 11.500h4.600V25H4.700zM12 11.500h4.300v2c2-3.500 9-3 9 4V25h-4.600v-6.500c0-4-4-4-4 0V25H12z"/></svg></button>
  <button class="plain app" aria-label="Finance"><svg class="i30" viewBox="0 0 30 30"><g fill="#4a6cf0"><path d="M0 3h12q2 0 2 2v22l-3-5V7H2zM30 3H18q-2 0-2 2v22l3-5V7h9zM3 10h7v4H5zM27 10h-7v4h5z"/></g></svg></button>
  <button class="plain app" aria-label="TradingView"><svg class="i30" viewBox="0 0 30 30"><rect width="30" height="30" rx="6" fill="#131722"/><path fill="#fff" d="M3 9h10v12H8v-7H3zM22 9h5l-5 12h-5z"/><circle cx="16.500" cy="11.500" r="2.500" fill="#fff"/></svg></button>
  <button class="plain app" aria-label="Vested"><svg class="i30" viewBox="0 0 30 30"><rect width="30" height="30" rx="6" fill="#ff5a22"/><path fill="none" stroke="#fff" stroke-width="3.500" d="M0 9.500h7q2 0 3 3l1.500 6q.8 3 3.500 3t3.500-3l1.500-6q1-3 3-3h7"/></svg></button>
  <button class="plain app" aria-label="StockEdge"><svg class="i30" viewBox="0 0 30 30"><path fill="url(#gStk)" d="M0 0h30v30H0z"/><g fill="#fff" text-anchor="middle" font-family="Roboto"><text x="15" y="12" font-size="8">STOCK</text><text x="15" y="24" font-size="10">EDGE</text></g></svg></button>
  <button class="plain app" aria-label="GitHub"><svg class="i30" viewBox="0 0 30 30"><path fill="#211d1f" d="M0 0h30v30H0z"/><g transform="translate(2 2) scale(1.620)"><path fill="#fff" d="M8 0C3.580 0 0 3.580 0 8c0 3.540 2.290 6.530 5.470 7.590.4.070.55-.17.55-.38 0-.19-.01-.82-.01-1.490-2.010.37-2.530-.49-2.690-.94-.09-.23-.48-.94-.82-1.130-.28-.15-.68-.52-.01-.53.63-.01 1.080.58 1.230.82.72 1.210 1.870.87 2.330.66.070-.52.28-.87.51-1.070-1.780-.2-3.640-.89-3.640-3.950 0-.87.31-1.590.82-2.150-.08-.2-.36-1.020.08-2.120 0 0 .67-.21 2.200.82.64-.18 1.320-.27 2-.27s1.360.09 2 .27c1.530-1.040 2.200-.82 2.200-.82.44 1.100.16 1.920.08 2.120.51.56.82 1.270.82 2.150 0 3.070-1.870 3.750-3.650 3.950.29.25.54.73.54 1.480 0 1.070-.01 1.930-.01 2.200 0 .21.15.46.55.38A8.010 8.010 0 0 0 16 8c0-4.420-3.580-8-8-8z"/></g></svg></button>
  <button class="plain app run" aria-label="ChatGPT"><svg class="i30" viewBox="0 0 24 24"><path fill="#111" d="M22.2819 9.8211a5.9847 5.9847 0 0 0-.5157-4.9108 6.0462 6.0462 0 0 0-6.5098-2.9A6.0651 6.0651 0 0 0 4.9807 4.1818a5.9847 5.9847 0 0 0-3.9977 2.9 6.0462 6.0462 0 0 0 .7427 7.0966 5.98 5.98 0 0 0 .511 4.9107 6.051 6.051 0 0 0 6.5146 2.9001A5.9847 5.9847 0 0 0 13.2599 24a6.0557 6.0557 0 0 0 5.7718-4.2058 5.9894 5.9894 0 0 0 3.9977-2.9001 6.0557 6.0557 0 0 0-.7475-7.0729zm-9.022 12.6081a4.4755 4.4755 0 0 1-2.8764-1.0408l.1419-.0804 4.7783-2.7582a.7948.7948 0 0 0 .3927-.6813v-6.7369l2.02 1.1686a.071.071 0 0 1 .038.052v5.5826a4.504 4.504 0 0 1-4.4945 4.4944zm-9.6607-4.1254a4.4708 4.4708 0 0 1-.5346-3.0137l.142.0852 4.783 2.7582a.7712.7712 0 0 0 .7806 0l5.8428-3.3685v2.3324a.0804.0804 0 0 1-.0332.0615L9.74 19.9502a4.4992 4.4992 0 0 1-6.1408-1.6464zM2.3408 7.8956a4.485 4.485 0 0 1 2.3655-1.9728V11.6a.7664.7664 0 0 0 .3879.6765l5.8144 3.3543-2.0201 1.1685a.0757.0757 0 0 1-.071 0l-4.8303-2.7865A4.504 4.504 0 0 1 2.3408 7.872zm16.5963 3.8558L13.1038 8.364 15.1192 7.2a.0757.0757 0 0 1 .071 0l4.8303 2.7913a4.4944 4.4944 0 0 1-.6765 8.1042v-5.6772a.79.79 0 0 0-.407-.667zm2.0107-3.0231l-.142-.0852-4.7735-2.7818a.7759.7759 0 0 0-.7854 0L9.409 9.2297V6.8974a.0662.0662 0 0 1 .0284-.0615l4.8303-2.7866a4.4992 4.4992 0 0 1 6.6802 4.66zM8.3065 12.863l-2.02-1.1638a.0804.0804 0 0 1-.038-.0567V6.0742a4.4992 4.4992 0 0 1 7.3757-3.4537l-.142.0805L8.704 5.459a.7948.7948 0 0 0-.3927.6813zm1.0976-2.3654l2.602-1.4998 2.6069 1.4998v2.9994l-2.5974 1.4997-2.6067-1.4997Z"/></svg></button>
  <button class="plain app" aria-label="Git"><svg class="i30" viewBox="0 0 30 30"><path fill="#ff7a7a" d="M15 0l7 7-7 7-7-7z"/><path fill="#7aaef8" d="M8 7.500l7 7.500-7 7.500L0 15z"/><path fill="#8bd05a" d="M22 7.500l8 7.500-8 7.500-7-7.500z"/><path fill="#ffe27a" d="M15 16l7 7-7 7-7-7z"/><path fill="none" stroke="#f6ece2" stroke-width="2" d="M11 3l4 6v12M15 10l6 5"/><circle cx="15" cy="21" r="2" fill="#f6ece2"/><circle cx="21" cy="15" r="2" fill="#f6ece2"/><circle cx="15" cy="10" r="2" fill="#f6ece2"/></svg></button>

  <div class="tray d-flex align-items-center ms-auto">
    <button class="plain me-4" aria-label="Show hidden icons"><svg width="14" height="8" viewBox="0 0 14 8"><path class="ln" stroke-width="1.800" d="M1 7l6-6 6 6"/></svg></button>
    <div class="text-center mx-1">ENG<br>IN</div>
    <button class="plain traybtns ms-3" aria-label="Network, volume and battery">
      <svg width="20" height="16" viewBox="0 0 20 16"><g class="ln" stroke-width="1.500"><path d="M1 6q9-8 18 0M4 9q6-5 12 0M7 12q3-2.500 6 0"/></g><circle cx="10" cy="14" r="1.800" fill="currentColor"/></svg>
      <svg width="20" height="16" viewBox="0 0 20 16"><g class="ln" stroke-width="1.300"><path stroke-linejoin="round" d="M1 5.500h3L8.500 1v14L4 10.500H1zM11 5.500q2 2.500 0 5M13.500 3.500q4 4.500 0 9M16 1.500q6 6.500 0 13"/></g></svg>
      <svg width="20" height="14" viewBox="0 0 20 14"><rect class="ln" stroke-width="1.500" x=".8" y="1.500" width="16" height="11" rx="2.500"/><path fill="currentColor" d="M3 4h6v6H3zM18 5q2 0 2 2t-2 2z"/></svg>
    </button>
    <div class="text-end clock">03:27 PM<br>19-05-2025</div>
    <button class="plain" aria-label="Notifications"><svg width="18" height="20" viewBox="0 0 18 20"><path fill="currentColor" d="M3 14V7q0-5 6-6v6h6v7l2 2H1zM6.500 17.500h5q-.5 2-2.500 2t-2.500-2z"/><path fill="none" stroke="#dde7d0" stroke-width="1.300" d="M6 7h4l-4 5h4"/><path class="ln" stroke-width="1.300" d="M12 1h4l-4 4h4"/></svg></button>
  </div>
</footer>
<script src="https://cdn.jsdelivr.net/npm/bootstrap@5.3.0/dist/js/bootstrap.bundle.min.js"></script>
</body>
</html>
